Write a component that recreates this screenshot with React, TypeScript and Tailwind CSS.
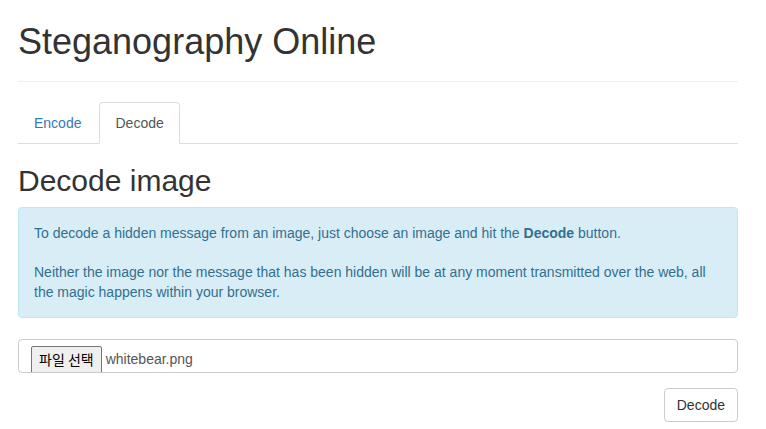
import React from "react";

const App: React.FC = () => {
    return (
        <div className="min-h-screen bg-white pl-[18px] pr-[28px] font-['Liberation_Sans','Noto_Sans_CJK_KR',sans-serif] text-[14px] leading-[20px] text-[#333]">
            <div className="pt-[22px] pb-[19px] mb-[20px] border-b border-[#eee]">
                <h1 className="text-[36px] leading-[40px] font-normal text-[#333]">Steganography Online</h1>
            </div>

            <ul className="flex border-b border-[#ddd]">
                <li className="mr-[2px] -mb-px">
                    <a className="block px-[15px] py-[10px] border border-transparent rounded-t-[4px] text-[#337ab7]">Encode</a>
                </li>
                <li className="mr-[2px] -mb-px">
                    <a className="block px-[15px] py-[10px] border border-[#ddd] border-b-white bg-white rounded-t-[4px] text-[#555]">Decode</a>
                </li>
            </ul>

            <h2 className="mt-[20px] mb-[10px] text-[30px] leading-[33px] font-normal text-[#333]">Decode image</h2>

            <div className="p-[15px] border border-[#bce8f1] bg-[#d9edf7] rounded-[4px] text-[#31708f] mb-[21px]">
                <p>To decode a hidden message from an image, just choose an image and hit the <b>Decode</b> button.</p>
                <p className="mt-[19px]">Neither the image nor the message that has been hidden will be at any moment transmitted over the web, all the magic happens within your browser.</p>
            </div>

            <div className="h-[34px] border border-[#ccc] rounded-[4px] pl-[12px] flex items-start pt-[6px] overflow-hidden mb-[15px]">
                <span className="h-[28px] px-[7px] border border-[#767676] rounded-[2px] bg-[#efefef] text-black text-[14px] leading-[25px] font-['Noto_Sans_CJK_KR',sans-serif]">파일 선택</span>
                <span className="ml-[4px] text-[#555] leading-[27px]">whitebear.png</span>
            </div>

            <div className="flex justify-end">
                <button className="h-[34px] px-[12px] border border-[#ccc] rounded-[4px] bg-white text-[#333]">Decode</button>
            </div>
        </div>
    );
};

export default App;
